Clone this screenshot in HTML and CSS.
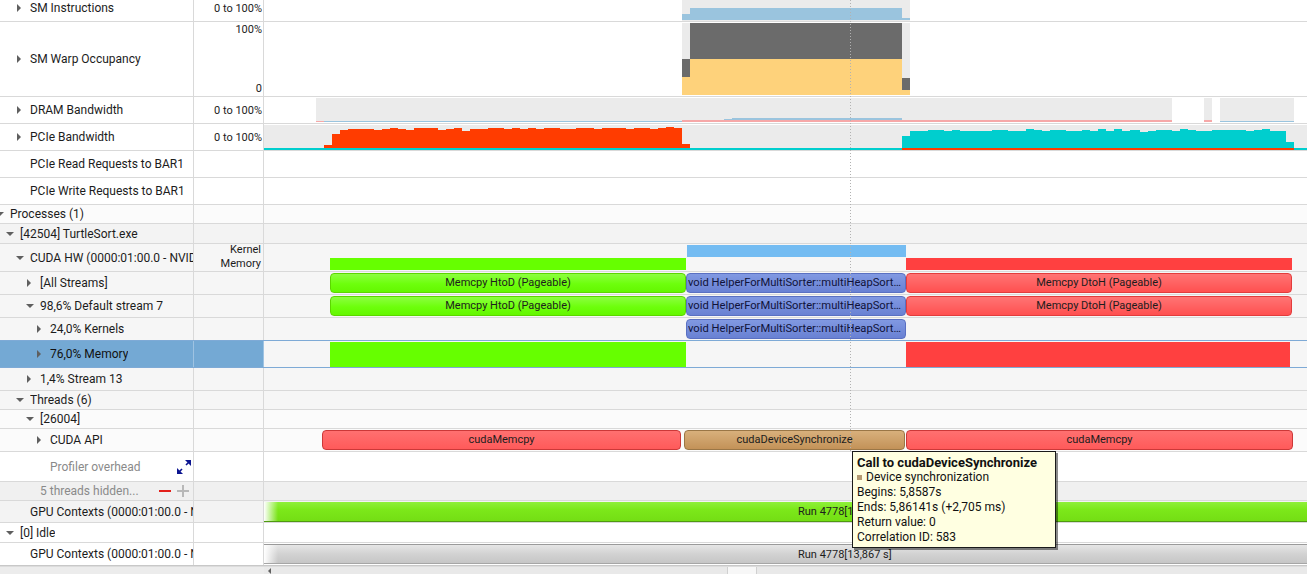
FILE: index.html
```html
<!DOCTYPE html>
<html>
<head>
<meta charset="utf-8">
<title>Timeline</title>
<link rel="stylesheet" href="styles.css">
</head>
<body>
<div class="view">
  <div class="rows">
    <div class="row h22 first">
      <div class="lbl i2"><span class="tg r"></span><span class="tx">SM Instructions</span></div>
      <div class="scale">0 to 100%</div>
      <div class="tl">
        <svg class="chart" width="1043" height="21" viewBox="0 0 1043 21">
          <rect x="418" y="0" width="228" height="21" fill="#ebebeb"/>
          <rect x="418" y="14" width="8" height="6" fill="#9ac4de"/>
          <rect x="426" y="8" width="212" height="12" fill="#9ac4de"/>
          <rect x="638" y="18" width="8" height="2" fill="#9ac4de"/>
        </svg>
      </div>
    </div>
    <div class="row h75">
      <div class="lbl i2"><span class="tg r"></span><span class="tx">SM Warp Occupancy</span></div>
      <div class="scale dual"><span>100%</span><span>0</span></div>
      <div class="tl">
        <svg class="chart" width="1043" height="74" viewBox="0 0 1043 74">
          <rect x="418" y="1" width="228" height="72" fill="#ebebeb"/>
          <rect x="418" y="37" width="8" height="18" fill="#6b6b6b"/>
          <rect x="426" y="1" width="212" height="36" fill="#6b6b6b"/>
          <rect x="638" y="56" width="8" height="12" fill="#6b6b6b"/>
          <rect x="418" y="55" width="8" height="18" fill="#fed27b"/>
          <rect x="426" y="37" width="212" height="36" fill="#fed27b"/>
          <rect x="638" y="68" width="8" height="5" fill="#fed27b"/>
        </svg>
      </div>
    </div>
    <div class="row h27">
      <div class="lbl i2"><span class="tg r"></span><span class="tx">DRAM Bandwidth</span></div>
      <div class="scale">0 to 100%</div>
      <div class="tl">
        <svg class="chart" width="1043" height="26" viewBox="0 0 1043 26">
          <rect x="52" y="1" width="856" height="24" fill="#ebebeb"/>
          <rect x="940" y="1" width="8" height="24" fill="#ebebeb"/>
          <rect x="956" y="1" width="74" height="24" fill="#ebebeb"/>
          <rect x="52" y="24" width="8" height="1" fill="#f6a8a8"/>
          <rect x="60" y="24" width="358" height="1" fill="#9ac4de"/>
          <rect x="418" y="23" width="490" height="2" fill="#f6a8a8"/>
          <rect x="460" y="22" width="8" height="1" fill="#9ac4de"/>
          <rect x="468" y="21" width="170" height="2" fill="#9ac4de"/>
          <rect x="940" y="23" width="8" height="2" fill="#f6a8a8"/>
          <rect x="956" y="24" width="74" height="1" fill="#9ac4de"/>
        </svg>
      </div>
    </div>
    <div class="row h27">
      <div class="lbl i2"><span class="tg r"></span><span class="tx">PCIe Bandwidth</span></div>
      <div class="scale">0 to 100%</div>
      <div class="tl">
        <svg class="chart" width="1043" height="26" viewBox="0 0 1043 26">
          <rect x="0" y="1" width="1043" height="23" fill="#ebebeb"/>
          <path fill="#ff3c00" d="M60 24 V21 H68 V10 H76 V6 H84 V5 H110 V6 H118 V5 H126 V4 H134 V5 H142 V6 H150 V4 H174 V6 H182 V5 H190 V4 H198 V7 H206 V5 H224 V4 H240 V5 H248 V4 H256 V5 H264 V4 H272 V5 H280 V4 H296 V5 H312 V4 H330 V5 H338 V4 H362 V5 H370 V4 H386 V5 H394 V4 H402 V3 H410 V4 H418 V20 H426 V24 Z"/>
          <path fill="#00cece" d="M638 24 V12 H646 V7 H664 V6 H680 V7 H688 V6 H696 V7 H728 V6 H744 V7 H762 V5 H770 V6 H778 V7 H786 V6 H802 V7 H818 V6 H826 V7 H834 V5 H842 V7 H850 V5 H858 V7 H866 V6 H876 V8 H884 V7 H892 V6 H908 V7 H916 V5 H924 V6 H932 V7 H948 V6 H982 V7 H990 V6 H998 V5 H1006 V7 H1022 V18 H1030 V24 Z"/>
          <rect x="0" y="24" width="1043" height="2" fill="#00cece"/>
          <rect x="638" y="24" width="392" height="2" fill="#ff3c00"/>
        </svg>
      </div>
    </div>
    <div class="row h27">
      <div class="lbl i2"><span class="tg"></span><span class="tx">PCIe Read Requests to BAR1</span></div>
      <div class="scale"></div>
      <div class="tl"></div>
    </div>
    <div class="row h27">
      <div class="lbl i2"><span class="tg"></span><span class="tx">PCIe Write Requests to BAR1</span></div>
      <div class="scale"></div>
      <div class="tl"></div>
    </div>
    <div class="row h19 bg-a">
      <div class="lbl i0"><span class="tg d"></span><span class="tx">Processes (1)</span></div>
      <div class="scale"></div>
      <div class="tl"></div>
    </div>
    <div class="row h20 bg-b">
      <div class="lbl i1"><span class="tg d"></span><span class="tx">[42504] TurtleSort.exe</span></div>
      <div class="scale"></div>
      <div class="tl"></div>
    </div>
    <div class="row h28 bg-c">
      <div class="lbl i2"><span class="tg d"></span><span class="tx">CUDA HW (0000:01:00.0 - NVIDIA GeForce GTX 1080)</span></div>
      <div class="scale dual km"><span>Kernel</span><span>Memory</span></div>
      <div class="tl">
        <div class="blk k" style="left:423px;width:219px"></div>
        <div class="blk m gr" style="left:66px;width:356px"></div>
        <div class="blk m rd" style="left:642px;width:386px"></div>
      </div>
    </div>
    <div class="row h23 bg-c">
      <div class="lbl i3"><span class="tg r"></span><span class="tx">[All Streams]</span></div>
      <div class="scale"></div>
      <div class="tl">
        <div class="ev g" style="left:66px;width:356px">Memcpy HtoD (Pageable)</div>
        <div class="ev b" style="left:422px;width:220px"><span class="evt">void HelperForMultiSorter::multiHeapSort&lt;unsigned int&gt;(unsigned int*, int, int)</span></div>
        <div class="ev r" style="left:642px;width:386px">Memcpy DtoH (Pageable)</div>
      </div>
    </div>
    <div class="row h23 bg-c">
      <div class="lbl i3"><span class="tg d"></span><span class="tx">98,6% Default stream 7</span></div>
      <div class="scale"></div>
      <div class="tl">
        <div class="ev g" style="left:66px;width:356px">Memcpy HtoD (Pageable)</div>
        <div class="ev b" style="left:422px;width:220px"><span class="evt">void HelperForMultiSorter::multiHeapSort&lt;unsigned int&gt;(unsigned int*, int, int)</span></div>
        <div class="ev r" style="left:642px;width:386px">Memcpy DtoH (Pageable)</div>
      </div>
    </div>
    <div class="row h23 bg-c">
      <div class="lbl i4"><span class="tg r"></span><span class="tx">24,0% Kernels</span></div>
      <div class="scale"></div>
      <div class="tl">
        <div class="ev b" style="left:422px;width:220px"><span class="evt">void HelperForMultiSorter::multiHeapSort&lt;unsigned int&gt;(unsigned int*, int, int)</span></div>
      </div>
    </div>
    <div class="row sel">
      <div class="lbl i4"><span class="tg r"></span><span class="tx">76,0% Memory</span></div>
      <div class="scale"></div>
      <div class="tl">
        <div class="blk big gr" style="left:66px;width:356px"></div>
        <div class="blk big rd" style="left:642px;width:384px"></div>
      </div>
    </div>
    <div class="row h23 bg-c">
      <div class="lbl i3"><span class="tg r"></span><span class="tx">1,4% Stream 13</span></div>
      <div class="scale"></div>
      <div class="tl"></div>
    </div>
    <div class="row h19 bg-c">
      <div class="lbl i2"><span class="tg d"></span><span class="tx">Threads (6)</span></div>
      <div class="scale"></div>
      <div class="tl"></div>
    </div>
    <div class="row h19 bg-a">
      <div class="lbl i3"><span class="tg d"></span><span class="tx">[26004]</span></div>
      <div class="scale"></div>
      <div class="tl"></div>
    </div>
    <div class="row h23 bg-a">
      <div class="lbl i4"><span class="tg r"></span><span class="tx">CUDA API</span></div>
      <div class="scale"></div>
      <div class="tl">
        <div class="ev r api" style="left:58px;width:359px">cudaMemcpy</div>
        <div class="ev br" style="left:420px;width:221px">cudaDeviceSynchronize</div>
        <div class="ev r api" style="left:642px;width:387px">cudaMemcpy</div>
      </div>
    </div>
    <div class="row h30 bg-w">
      <div class="lbl i4 pad-r"><span class="tg"></span><span class="tx muted">Profiler overhead</span>
        <svg class="expand" width="14" height="14" viewBox="0 0 14 14">
          <polygon points="8,0 14,0 14,6" fill="#0c1590"/>
          <line x1="12" y1="2" x2="9" y2="5" stroke="#0c1590" stroke-width="1.6"/>
          <polygon points="0,8 0,14 6,14" fill="#0c1590"/>
          <line x1="2" y1="12" x2="5" y2="9" stroke="#0c1590" stroke-width="1.6"/>
        </svg>
      </div>
      <div class="scale"></div>
      <div class="tl"></div>
    </div>
    <div class="row h19 bg-d">
      <div class="lbl i3 pad-r2"><span class="tg"></span><span class="tx muted">5 threads hidden...</span>
        <span class="pm">
          <svg width="12" height="12" viewBox="0 0 12 12"><rect x="0" y="5" width="12" height="2" fill="#e3201b"/></svg>
          <svg width="12" height="12" viewBox="0 0 12 12"><rect x="0" y="5" width="12" height="2" fill="#b8b8b8"/><rect x="5" y="0" width="2" height="12" fill="#b8b8b8"/></svg>
        </span>
      </div>
      <div class="scale"></div>
      <div class="tl"></div>
    </div>
    <div class="row h22 bg-b">
      <div class="lbl i2"><span class="tg"></span><span class="tx">GPU Contexts (0000:01:00.0 - NVIDIA GeForce GTX 1080)</span></div>
      <div class="scale"></div>
      <div class="tl">
        <div class="ctx green">Run 4778[13,867 s]</div>
      </div>
    </div>
    <div class="row h20 bg-w">
      <div class="lbl i1"><span class="tg d"></span><span class="tx">[0] Idle</span></div>
      <div class="scale"></div>
      <div class="tl"></div>
    </div>
    <div class="row h23 bg-w last">
      <div class="lbl i2"><span class="tg"></span><span class="tx">GPU Contexts (0000:01:00.0 - NVIDIA GeForce GTX 1080)</span></div>
      <div class="scale"></div>
      <div class="tl">
        <div class="ctx grey">Run 4778[13,867 s]</div>
      </div>
    </div>
  </div>
  <div class="hscroll">
    <div class="hs-left"></div>
    <div class="hs-track"><span class="hs-arrow"></span><span class="hs-thumb"></span></div>
  </div>
  <div class="cursor"></div>
  <div class="tip">
    <div class="tip-title">Call to cudaDeviceSynchronize</div>
    <div><span class="sq"></span>Device synchronization</div>
    <div>Begins: 5,8587s</div>
    <div>Ends: 5,86141s (+2,705 ms)</div>
    <div>Return value: 0</div>
    <div>Correlation ID: 583</div>
  </div>
</div>
</body>
</html>
```

FILE: styles.css
```css
html, body {
  margin: 0;
  padding: 0;
  background: #ffffff;
}
body {
  font-family: Roboto, "Noto Sans", "Liberation Sans", sans-serif;
  font-size: 12px;
  color: #1c1c1c;
  overflow: hidden;
}
.view {
  position: relative;
  width: 1307px;
  height: 574px;
  overflow: hidden;
}
.rows {
  display: flex;
  flex-direction: column;
}
.row {
  display: grid;
  grid-template-columns: 194px 70px 1043px;
  box-sizing: border-box;
  border-bottom: 1px solid #d9d9d9;
  flex: none;
}
.h19 { height: 19px; }
.h20 { height: 20px; }
.h22 { height: 22px; }
.h23 { height: 23px; }
.h27 { height: 27px; }
.h28 { height: 28px; }
.h30 { height: 30px; }
.h75 { height: 75px; }

.bg-w { background: #ffffff; }
.bg-a { background: #fbfbfb; }
.bg-b { background: #f3f3f3; }
.bg-c { background: #f6f6f6; }
.bg-d { background: #f0f0f0; }

.lbl {
  border-right: 1px solid #d9d9d9;
  display: flex;
  align-items: center;
  white-space: nowrap;
  overflow: hidden;
  min-width: 0;
}
.lbl .tx {
  flex: 0 1 auto;
  min-width: 0;
  overflow: hidden;
  text-overflow: clip;
}
.lbl .muted { color: #8a8a8a; }
.i0 { padding-left: 0; }
.i0 .tg { margin-left: -4px; }
.i1 { padding-left: 6px; }
.i2 { padding-left: 16px; }
.i3 { padding-left: 26px; }
.i4 { padding-left: 36px; }

.tg {
  flex: none;
  width: 14px;
  height: 8px;
  position: relative;
}
.tg.r::before {
  content: "";
  position: absolute;
  left: 1px;
  top: 0;
  border-left: 4px solid #5f5f5f;
  border-top: 4px solid transparent;
  border-bottom: 4px solid transparent;
}
.tg.d::before {
  content: "";
  position: absolute;
  left: 0;
  top: 2px;
  border-top: 4px solid #5f5f5f;
  border-left: 4px solid transparent;
  border-right: 4px solid transparent;
}
.scale {
  border-right: 1px solid #d9d9d9;
  font-size: 11px;
  display: flex;
  align-items: center;
  justify-content: flex-end;
  padding-right: 1px;
  white-space: nowrap;
}
.scale.dual {
  flex-direction: column;
  align-items: flex-end;
  justify-content: space-between;
  padding: 1px 1px 1px 0;
  line-height: 13px;
}
.scale.km {
  justify-content: flex-start;
  padding: 0 2px 0 0;
  margin-top: -1px;
  line-height: 14px;
}
.first .lbl, .first .scale { padding-bottom: 5px; }
.first .scale { padding-right: 1px; }

.tl {
  position: relative;
  overflow: hidden;
}
.chart { display: block; }

.pad-r { padding-right: 2px; }
.pad-r .expand { margin-left: auto; flex: none; }
.pad-r2 { padding-right: 4px; }
.pm {
  margin-left: auto;
  display: flex;
  gap: 6px;
  flex: none;
}
.pm svg { display: block; }

/* Event blocks on the timeline canvas */
.blk { position: absolute; }
.blk.k { top: 1px; height: 12px; background: #74bcf2; }
.blk.m { top: 14px; height: 12px; }
.blk.big { top: 1px; height: 25px; }
.blk.gr { background: #66ff00; }
.blk.rd { background: #ff4040; }

.ev {
  position: absolute;
  top: 1px;
  height: 20px;
  box-sizing: border-box;
  border: 1px solid;
  border-radius: 4px;
  font-size: 11px;
  line-height: 18px;
  text-align: center;
  white-space: nowrap;
  overflow: hidden;
  color: #1d1d1d;
}
.ev.g {
  background: linear-gradient(#8cff40, #6dff0c 55%, #64f700);
  border-color: #5cd600;
}
.ev.b {
  background: linear-gradient(#8199e2, #6981d3);
  border-color: #5a70c2;
  text-align: left;
  padding-left: 1px;
  font-size: 11.2px;
  color: #10133a;
}
.evt {
  display: block;
  overflow: hidden;
  text-overflow: ellipsis;
  white-space: nowrap;
}
.ev.r {
  background: linear-gradient(#ff7474, #ff5050);
  border-color: #e23c3c;
}
.ev.r.api {
  background: linear-gradient(#ff7070, #ff5a5a);
  border-color: #cc3838;
}
.ev.br {
  background: linear-gradient(#d8b07c, #c39258);
  border-color: #9a7646;
}

/* selected row */
.sel {
  height: 28px;
  margin-top: -1px;
  border-top: 1px solid #7eaad6;
  border-bottom: 1px solid #7eaad6;
  background: #f6f6f6;
}
.sel .lbl, .sel .scale {
  background: #74a9d4;
  border-right-color: #9fc3e2;
}
.sel .lbl { color: #111; }

.ctx {
  position: absolute;
  left: 0;
  right: 0;
  top: 1px;
  height: 20px;
  box-sizing: border-box;
  font-size: 11px;
  line-height: 19px;
  padding-left: 534px;
  white-space: nowrap;
  color: #1d1d1d;
}
.ctx.green {
  background:
    linear-gradient(to right, #ffffff, rgba(255,255,255,0) 14px),
    linear-gradient(#8ef03a, #7ce81a 40%, #74de14);
  border-bottom: 1px solid #4f9a10;
}
.ctx.grey {
  background:
    linear-gradient(to right, #ffffff, rgba(255,255,255,0) 14px),
    linear-gradient(#e6e6e6, #d2d2d2 50%, #c6c6c6);
  border-top: 1px solid #9a9a9a;
  border-bottom: 1px solid #a6a6a6;
}
.last { border-bottom: 1px solid #c8c8c8; }

.hscroll {
  display: grid;
  grid-template-columns: 264px 1043px;
  height: 8px;
  border-top: 1px solid #dcdcdc;
}
.hs-left { background: #ececec; }
.hs-track {
  background: #e9e9e9;
  position: relative;
  display: flex;
  align-items: center;
}
.hs-arrow {
  margin-left: 4px;
  width: 0;
  height: 0;
  border-right: 3px solid #606060;
  border-top: 3px solid transparent;
  border-bottom: 3px solid transparent;
}
.hs-thumb {
  margin-left: 456px;
  width: 28px;
  height: 8px;
  background: #f7f7f7;
  border-left: 1px solid #d0d0d0;
  border-right: 1px solid #d0d0d0;
}

.cursor {
  position: absolute;
  left: 850px;
  top: 0;
  width: 1px;
  height: 452px;
  background: repeating-linear-gradient(to bottom, #b2b2b2 0 1px, transparent 1px 3px);
  pointer-events: none;
}

.tip {
  position: absolute;
  left: 852px;
  top: 451px;
  width: 204px;
  height: 97px;
  box-sizing: border-box;
  background: #ffffe1;
  border: 1px solid #1a1a1a;
  box-shadow: 2px 2px 0 rgba(0, 0, 0, 0.45);
  padding: 3px 0 0 4px;
  font-size: 12px;
  line-height: 15px;
  color: #111;
  white-space: nowrap;
}
.tip-title {
  font-weight: bold;
  font-size: 13px;
}
.sq {
  display: inline-block;
  width: 5px;
  height: 5px;
  background: #b59a72;
  margin-right: 4px;
  vertical-align: 1px;
}
```
